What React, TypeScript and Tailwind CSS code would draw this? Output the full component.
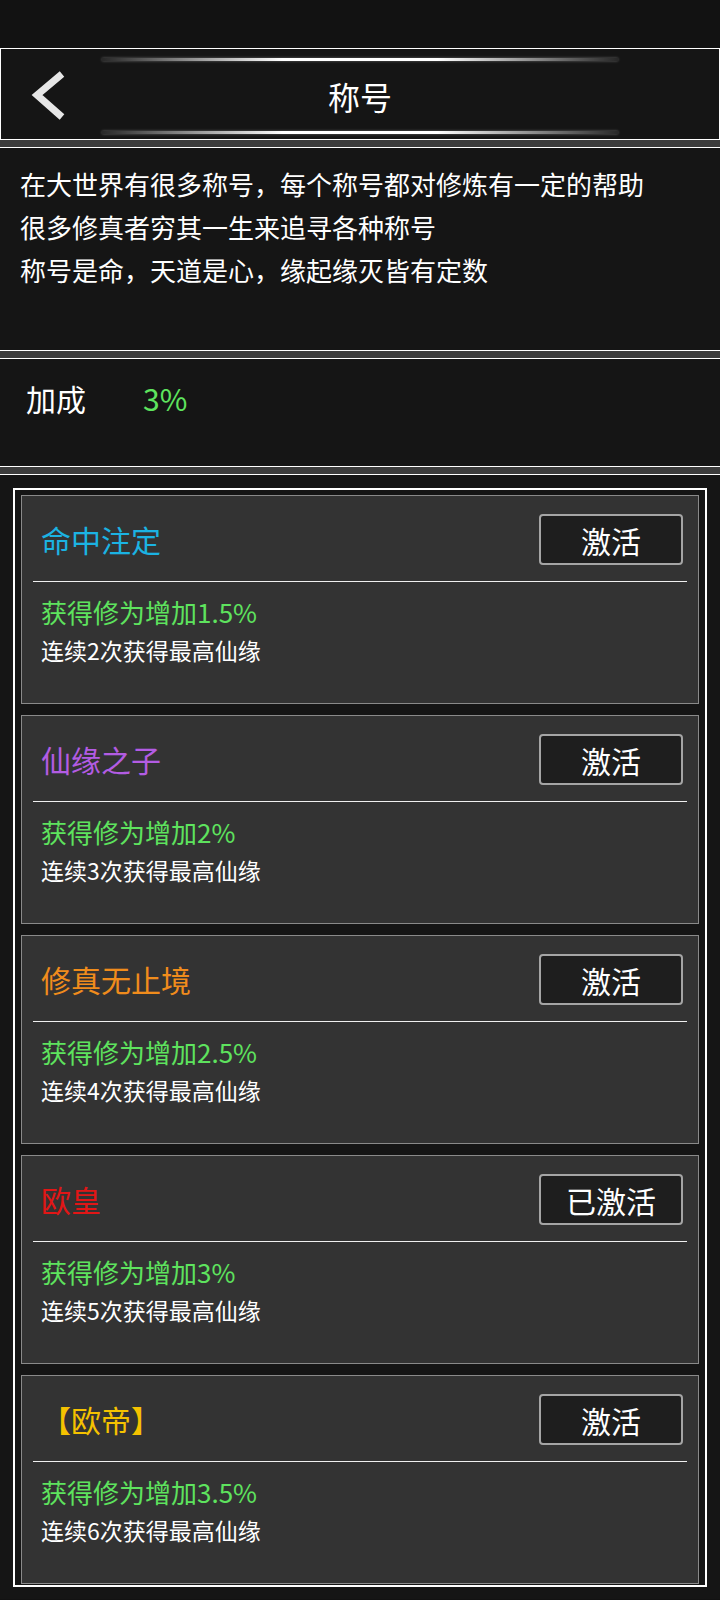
import React from "react";

interface TitleItem {
  name: string;
  color: string;
  bonus: string;
  cond: string;
  active: boolean;
}

const TITLES: TitleItem[] = [
  { name: "命中注定", color: "text-[#1bb3e3]", bonus: "获得修为增加1.5%", cond: "连续2次获得最高仙缘", active: false },
  { name: "仙缘之子", color: "text-[#b35ce3]", bonus: "获得修为增加2%", cond: "连续3次获得最高仙缘", active: false },
  { name: "修真无止境", color: "text-[#f08c1c]", bonus: "获得修为增加2.5%", cond: "连续4次获得最高仙缘", active: false },
  { name: "欧皇", color: "text-[#e21616]", bonus: "获得修为增加3%", cond: "连续5次获得最高仙缘", active: true },
  { name: "【欧帝】", color: "text-[#f5c200]", bonus: "获得修为增加3.5%", cond: "连续6次获得最高仙缘", active: false },
];

function GlowLine() {
  return (
    <div className="mx-auto h-[3px] w-[516px] bg-[linear-gradient(90deg,rgba(255,255,255,0.08),#ffffff_35%,#ffffff_65%,rgba(255,255,255,0.08))] shadow-[0_0_3px_rgba(255,255,255,0.35)]" />
  );
}

function Strip() {
  return <div className="h-[7px] bg-[#3c3c3c]" />;
}

function TitleCard({ item }: { item: TitleItem }) {
  return (
    <div className="flex h-[209px] flex-col border border-[#8a8a8a] bg-[#333333]">
      {/* Name + button */}
      <div className="flex h-[85px] items-start justify-between pl-[19px] pr-[15px] pt-[18px]">
        <span className={`text-[30px] leading-[51px] ${item.color}`}>{item.name}</span>
        <button
          type="button"
          className="flex h-[51px] w-[144px] items-center justify-center rounded-[4px] border-2 border-[#a5a5a5] bg-[#1e1e1e] text-[30px] leading-none text-white"
        >
          {item.active ? "已激活" : "激活"}
        </button>
      </div>
      <div className="mx-[11px] h-px bg-[#f0f0f0]" />
      <div className="pl-[19px]">
        <p className="mt-[12px] text-[26px] leading-[36px] text-[#5ee35e]">{item.bonus}</p>
        <p className="mt-[4px] text-[23px] leading-[32px] text-white">{item.cond}</p>
      </div>
    </div>
  );
}

export default function App() {
  return (
    <div className="min-h-[1600px] w-[720px] bg-[#121212] font-['Noto_Sans_CJK_SC','Noto_Sans',sans-serif]">
      <div className="h-[48px]" />

      {/* Header */}
      <div className="flex h-[92px] flex-col border border-white bg-[#151515] pt-[9px] pb-[5px]">
        <GlowLine />
        <div className="flex h-[70px] items-center">
          <div className="w-[110px]">
            <svg width="46" height="58" viewBox="0 0 46 58" className="ml-[21px]">
              <polyline points="40,7 15,28 40,50" fill="none" stroke="#e6e6e6" strokeWidth="7" />
            </svg>
          </div>
          <h1 className="flex-1 text-center text-[32px] leading-none text-white">称号</h1>
          <div className="w-[110px]" />
        </div>
        <GlowLine />
      </div>

      <Strip />

      {/* Description */}
      <div className="h-[204px] border-y border-white bg-[#151515] px-[20px] pt-[14px]">
        <p className="text-[26px] leading-[43px] text-white">在大世界有很多称号，每个称号都对修炼有一定的帮助</p>
        <p className="text-[26px] leading-[43px] text-white">很多修真者穷其一生来追寻各种称号</p>
        <p className="text-[26px] leading-[43px] text-white">称号是命，天道是心，缘起缘灭皆有定数</p>
      </div>

      <Strip />

      {/* Bonus */}
      <div className="flex h-[109px] items-start border-y border-white bg-[#151515] pl-[26px] pt-[19px]">
        <span className="text-[30px] leading-[40px] text-white">加成</span>
        <span className="ml-[57px] text-[30px] leading-[40px] text-[#5ee35e]">3%</span>
      </div>

      <Strip />

      {/* Title list */}
      <div className="border-t border-white bg-[#151515] px-[13px] pt-[13px] pb-[12px]">
        <div className="flex w-[694px] flex-col gap-[11px] border-2 border-white px-[6px] pt-[5px] pb-[1px]">
          {TITLES.map((t) => (
            <TitleCard key={t.name} item={t} />
          ))}
        </div>
      </div>
    </div>
  );
}
